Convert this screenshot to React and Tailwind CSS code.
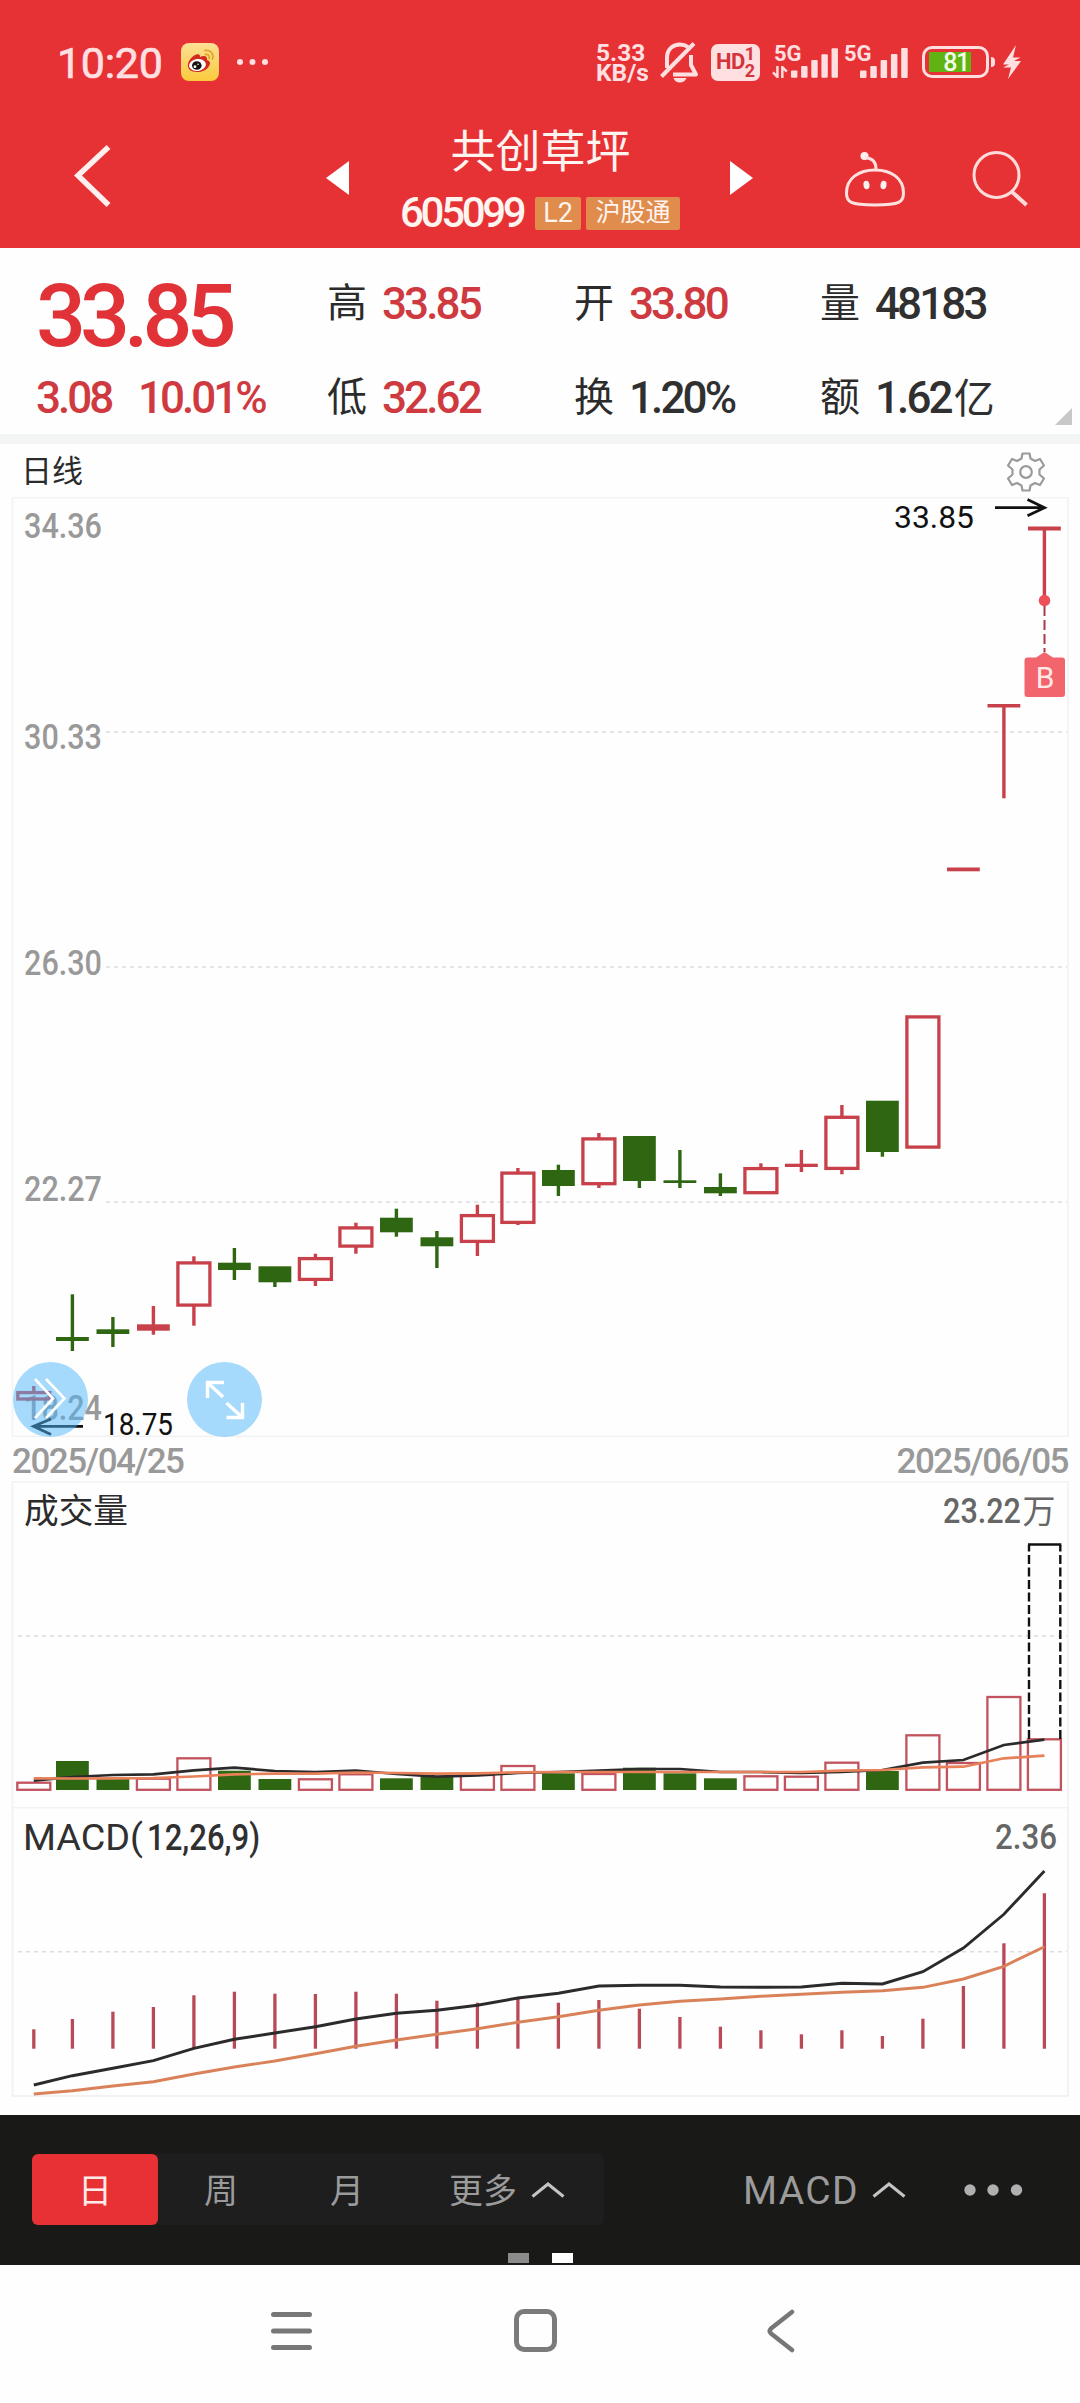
import React from 'react';

const LINE_RED = '#c8404a';
const GREEN = '#2f6612';
const ORANGE = '#d98259';
const FONT = 'Roboto, "Noto Sans CJK SC", sans-serif';

// x centre of the n-th trading day
const dayX = (i) => (i === 0 ? 33.8 : 72.4 + (i - 1) * 40.5);

// [type, high, bodyTop, bodyBottom, low]  r = hollow, s = solid red, g = green
const candles = [
  ['r', 1386, 1391, 1400.6, 1400],
  ['g', 1294.3, 1337, 1341, 1351],
  ['g', 1317, 1329.3, 1334, 1347],
  ['s', 1306, 1324.3, 1330.7, 1334.7],
  ['r', 1256.3, 1261.3, 1306.7, 1325.7],
  ['g', 1248, 1262.7, 1270, 1280],
  ['g', 1266.3, 1266.3, 1282.3, 1287],
  ['r', 1253.7, 1257, 1281, 1286],
  ['r', 1222.7, 1226.3, 1247.7, 1253.7],
  ['g', 1208.7, 1217.7, 1232.3, 1236.7],
  ['g', 1231, 1237.3, 1246.3, 1268],
  ['r', 1204.7, 1214, 1243, 1256],
  ['r', 1168, 1171.5, 1224, 1225],
  ['g', 1164.7, 1170, 1186, 1196],
  ['r', 1133, 1137.3, 1185.3, 1188],
  ['g', 1136, 1136, 1181, 1188],
  ['g', 1150, 1180.3, 1183, 1188],
  ['g', 1173.3, 1187, 1193.3, 1196],
  ['r', 1163.3, 1167, 1194.3, 1194],
  ['s', 1150, 1163.7, 1167, 1172],
  ['r', 1105, 1115.7, 1170, 1174.3],
  ['g', 1100.7, 1100.7, 1152, 1156.7],
  ['r', 1016, 1015.3, 1148.7, 1148],
  ['s', 867.5, 867.5, 871.3, 871],
  ['s', 704, 704, 707.5, 798.3],
  ['s', 526.5, 526.5, 530.5, 600],
];

const volumes = [
  ['r', 1781.7], ['g', 1761], ['g', 1779], ['r', 1777.7], ['r', 1757.3], ['g', 1770.7],
  ['g', 1779], ['r', 1778.3], ['r', 1773.3], ['g', 1778.3], ['g', 1776.7], ['r', 1774],
  ['r', 1765], ['g', 1773.3], ['r', 1773], ['g', 1767.7], ['g', 1773.3], ['g', 1778.3],
  ['r', 1775.3], ['r', 1775.7], ['r', 1761.7], ['g', 1771], ['r', 1734.3], ['r', 1762],
  ['r', 1696], ['r', 1738.3],
];

const volMa5 = [
  1780.7, 1777, 1775, 1774.3, 1770.3, 1767.7, 1771, 1772, 1770.5, 1774, 1776.7, 1775.5, 1773,
  1772, 1770.7, 1769, 1769, 1772, 1772, 1773, 1772, 1770, 1762.7, 1760, 1745, 1739.7,
];
const volMa10 = [
  1778.3, 1778.5, 1778.3, 1778, 1776.5, 1774.3, 1773.7, 1773.7, 1772.5, 1773, 1773.7, 1773.3, 1772.3,
  1772, 1772, 1772, 1772, 1772, 1772, 1772, 1770.7, 1770, 1767.3, 1766.7, 1758.3, 1755.7,
];

const macdBars = [
  2029.3, 2019, 2011.7, 2007, 1995.3, 1991.7, 1993.7, 1994, 1991.7, 1993.7, 2000.7, 2002.7, 1999,
  2002.7, 2000, 2008.7, 2017, 2026.7, 2030.3, 2034.3, 2030.3, 2036, 2018.7, 1986, 1943.3, 1893.3,
];
const dif = [
  2085, 2075.7, 2068.3, 2060.7, 2048.3, 2039.3, 2033, 2026.7, 2019, 2013.3, 2010.3, 2005.3, 1998,
  1993.3, 1986, 1985.3, 1985.3, 1987, 1987.3, 1987, 1983.3, 1984, 1971.7, 1948, 1914.3, 1871,
];
const dea = [
  2094, 2090.7, 2086, 2081.7, 2074, 2067, 2061, 2053.7, 2046.3, 2040, 2034.3, 2028.7, 2022.3,
  2016.7, 2010.3, 2005, 2001.3, 1999, 1996.3, 1994.3, 1992.3, 1990.7, 1987.3, 1979, 1966.3, 1946.7,
];

const toPoints = (values) => values.map((y, i) => `${dayX(i)},${y}`).join(' ');

const Grid = ({ y, from = 18 }) => (
  <line x1={from} x2="1067" y1={y} y2={y} stroke="#dddddf" strokeWidth="1.6" strokeDasharray="4 4" />
);

const Label = ({ x, y, w, size = 35, fill = '#999', weight = 500, children }) => (
  <text x={x} y={y} fontSize={size} fill={fill} fontWeight={weight} textLength={w} lengthAdjust="spacingAndGlyphs">
    {children}
  </text>
);

const Signal = () => (
  <svg width="48" height="30" viewBox="0 0 48 30" fill="#ffdfe0">
    <rect x="0" y="22.5" width="6.5" height="7.5" rx="1" />
    <rect x="10.3" y="18" width="6.5" height="12" rx="1" />
    <rect x="20.6" y="12" width="6.5" height="18" rx="1" />
    <rect x="30.9" y="6" width="6.5" height="24" rx="1" />
    <rect x="41.2" y="0" width="6.5" height="30" rx="1" />
  </svg>
);

const StatusBar = () => (
  <div className="flex h-[124px] items-center pl-[57px] text-[#ffdfe0]">
    <div className="w-[104px] pt-[2px] text-[43px] leading-[44px] font-normal tracking-[-0.3px] [-webkit-text-stroke:0.7px_#ffdfe0]">10:20</div>
    <svg className="ml-5" width="38" height="38" viewBox="0 0 38 38">
      <defs>
        <linearGradient id="weibo" x1="0" y1="0" x2="0" y2="1">
          <stop offset="0" stopColor="#fbdf94" />
          <stop offset="1" stopColor="#fbcb3c" />
        </linearGradient>
      </defs>
      <rect width="38" height="38" rx="8" fill="url(#weibo)" />
      <path d="M7 21C8 16 14 10 18 11.500C19 12 19 13.500 19 14C23 12 26.500 12.500 26 17C29 18 30 20 28 23C26 27 21 29 16 29C10 29 6 26 7 21Z" fill="#d22a22" />
      <ellipse cx="16.500" cy="22" rx="8.500" ry="6" fill="#fff" transform="rotate(-8 16.500 22)" />
      <ellipse cx="15.800" cy="22.500" rx="4.800" ry="4.300" fill="#16120f" />
      <circle cx="14" cy="23.700" r="1.400" fill="#fff" />
      <circle cx="17" cy="21.200" r="0.800" fill="#fff" />
      <path d="M24 7.500C29.500 6.500 33 11 31.500 16M24.500 11.500C27 11 29 13 28.200 15.500" fill="none" stroke="#dfa52c" strokeWidth="1.800" strokeLinecap="round" />
    </svg>
    <svg className="ml-[17px]" width="34" height="8" viewBox="0 0 34 8" fill="#ffdfe0">
      <circle cx="4" cy="4" r="3" />
      <circle cx="16.500" cy="4" r="3" />
      <circle cx="29" cy="4" r="3" />
    </svg>

    <div className="ml-[326px] w-[56px] pt-0.5 text-[24.500px] leading-[20.500px] font-bold">
      <div>5.33</div>
      <div>KB/s</div>
    </div>
    <svg className="ml-[8px]" width="40" height="42" viewBox="0 0 40 42" fill="none" stroke="#ffdfe0" strokeWidth="4" strokeLinejoin="round">
      <path d="M7 27V17C7 8 13 3.500 20 3.500C23 3.500 26 4.500 28 6" />
      <path d="M31 14V24L36 33.500H13" />
      <path d="M1.500 35.500L34 2.500" />
      <path d="M13.500 37H26.500C25 41 21 41.500 20 41.500C18 41.500 15 41 13.500 37Z" fill="#ffdfe0" stroke="none" />
    </svg>
    <div className="ml-[11px] flex h-[37px] w-[49px] items-center justify-center rounded-[7px] bg-[#ffdfe0] text-[#d5343c]">
      <span className="text-[22px] leading-none font-bold tracking-[-0.500px]">HD</span>
      <span className="flex flex-col text-[18px] leading-[17px] font-bold">
        <span>1</span>
        <span>2</span>
      </span>
    </div>
    <div className="relative ml-[12px] flex h-[36px] w-[66px] items-end justify-end pb-[2px]">
      <span className="absolute top-[-1px] left-[2px] text-[22px] leading-[22px] font-bold">5G</span>
      <svg className="mr-[3px]" width="16" height="12" viewBox="0 0 16 12" fill="none" stroke="#ffdfe0" strokeWidth="2.500">
        <path d="M5.500 0V11L1 6.500M10.500 12V1L15 5.500" />
      </svg>
      <Signal />
    </div>
    <div className="relative ml-[4px] flex h-[36px] w-[66px] items-end justify-end pb-[2px]">
      <span className="absolute top-[-1px] left-[2px] text-[22px] leading-[22px] font-bold">5G</span>
      <Signal />
    </div>
    <div className="ml-[14px] flex items-center">
      <div className="relative flex h-[32px] w-[67px] items-center justify-center rounded-[10px] border-[3.5px] border-[#ffdfe0]">
        <div className="absolute top-[2.500px] left-[4px] h-[20px] w-[42px] bg-[#5fb312]" />
        <span className="relative pl-px text-[25px] leading-[25px] font-medium tracking-[-1.500px] text-[#f4ffe8]">81</span>
      </div>
      <div className="ml-[2px] h-[10px] w-[4px] rounded-r bg-[#ffdfe0]" />
    </div>
    <svg className="ml-[7px]" width="20" height="34" viewBox="0 0 20 34" fill="#ffdfe0">
      <path d="M14 0L1 19.500H7L1 22.500H9L6 34L19 16H12L18.500 12.500H11Z" />
    </svg>
  </div>
);

const TitleBar = () => (
  <div className="flex h-[104px] items-center">
    <svg className="ml-[73px]" width="38" height="64" viewBox="0 0 38 64" fill="none" stroke="#ffefee" strokeWidth="5.500">
      <path d="M35.500 3L5 31.500L35.500 61" />
    </svg>
    <svg className="mt-[3px] ml-[215px]" width="23" height="34" viewBox="0 0 23 34" fill="#fff">
      <path d="M23 0V34L0 17Z" />
    </svg>
    <div className="ml-[51px] w-[281px] text-[#fff4ef]">
      <div className="text-center text-[45px] leading-[74px] font-normal">共创草坪</div>
      <div className="flex h-[46px] items-center">
        <span className="w-[135px] text-[42px] leading-[42px] font-medium tracking-[-3.300px]">605099</span>
        <span className="flex h-[33px] w-[46px] items-center justify-center rounded-[2px] bg-[#e08c4d] text-[27px]">L2</span>
        <span className="ml-[5px] flex h-[33px] w-[94px] items-center justify-center rounded-[2px] bg-[#e08c4d] text-[25px]">沪股通</span>
      </div>
    </div>
    <svg className="mt-[3px] ml-[49px]" width="23" height="34" viewBox="0 0 23 34" fill="#fff">
      <path d="M0 0V34L23 17Z" />
    </svg>
    <svg className="mt-[6px] ml-[90px]" width="64" height="56" viewBox="0 0 64 56" fill="none" stroke="#ffe2e0" strokeWidth="3">
      <circle cx="21.500" cy="5" r="4" fill="#ffefee" stroke="none" />
      <path d="M22 6.500C29 7 33 11 33 18" />
      <path d="M32 19C48 19 60.500 27 60.500 42C60.500 51 57 54 32 54C7 54 3.500 51 3.500 42C3.500 27 16 19 32 19Z" />
      <ellipse cx="23.500" cy="34" rx="3" ry="4.200" fill="#ffefee" stroke="none" transform="rotate(-8 23.500 34)" />
      <ellipse cx="40.500" cy="34" rx="3" ry="4.200" fill="#ffefee" stroke="none" transform="rotate(8 40.500 34)" />
    </svg>
    <svg className="mt-[3px] ml-[64px]" width="58" height="58" viewBox="0 0 58 58" fill="none" stroke="#ffdcda" strokeWidth="3">
      <circle cx="25.500" cy="26" r="22.500" />
      <path d="M40 42L55.500 56" strokeWidth="4" />
    </svg>
  </div>
);

const Stat = ({ label, value, red }) => (
  <div className="flex h-[70px] items-center">
    <span className="w-[55px] text-[40px] leading-[70px] text-[#2b2b2b]">{label}</span>
    <span className={`text-[44px] leading-[70px] font-medium tracking-[-2.900px] ${red ? 'text-[#cf3a40]' : 'text-[#303030]'}`}>
      {value}
    </span>
  </div>
);

const Quote = () => (
  <div className="relative flex h-[186px] pt-[21px]">
    <div className="w-[327px] pt-[12px] pl-[36px] font-medium">
      <div className="text-[88px] leading-[70px] tracking-[-6px] text-[#e03237]">33.85</div>
      <div className="mt-3 flex text-[44px] leading-[70px] tracking-[-3px] text-[#cf3a40]">
        <span className="w-[102px]">3.08</span>
        <span>10.01%</span>
      </div>
    </div>
    <div className="grid grid-cols-[247px_246px_auto] content-start gap-y-6">
      <Stat label="高" value="33.85" red />
      <Stat label="开" value="33.80" red />
      <Stat label="量" value="48183" />
      <Stat label="低" value="32.62" red />
      <Stat label="换" value="1.20%" />
      <Stat label="额" value={<>1.62<span className="pl-[3px] text-[41px] font-normal">亿</span></>} />
    </div>
    <svg className="absolute right-2 bottom-[9px]" width="17" height="17" viewBox="0 0 17 17">
      <path d="M17 0V17H0Z" fill="#c8c8c8" />
    </svg>
  </div>
);

const Candle = ({ i, type, high, top, bottom, low }) => {
  const x = dayX(i);
  const color = type === 'g' ? GREEN : LINE_RED;
  return (
    <g>
      {high < top && <line x1={x} x2={x} y1={high} y2={top + 1} stroke={color} strokeWidth="3.400" />}
      {low > bottom && <line x1={x} x2={x} y1={bottom - 1} y2={low} stroke={color} strokeWidth="3.400" />}
      {type === 'r' ? (
        <rect x={x - 16} y={top + 1.6} width="32" height={bottom - top - 3.2} fill="none" stroke={color} strokeWidth="3.300" />
      ) : (
        <rect x={x - 16.4} y={top} width="32.800" height={bottom - top} fill={color} />
      )}
    </g>
  );
};

const KLineChart = () => (
  <div className="relative h-[940px]">
    <svg className="block" width="1080" height="940" viewBox="0 497 1080 940" fontFamily={FONT}>
      <path d="M12.500 1437V497.500H1068V1437" fill="none" stroke="#f4f4f5" strokeWidth="2" />
      <Grid y={732} from={106} />
      <Grid y={967} from={106} />
      <Grid y={1202} from={106} />
      <Label x={24} y={538} w={78}>34.36</Label>
      <Label x={24} y={749} w={78}>30.33</Label>
      <Label x={24} y={975} w={78}>26.30</Label>
      <Label x={24} y={1201} w={78}>22.27</Label>
      <Label x={24} y={1420} w={78}>18.24</Label>

      {candles.map(([type, high, top, bottom, low], i) => (
        <Candle key={i} i={i} type={type} high={high} top={top} bottom={bottom} low={low} />
      ))}

      {/* buy marker */}
      <circle cx="1044.500" cy="600.500" r="5.800" fill="#ee5059" />
      <path d="M1044.500 606V652" stroke="#a63b46" strokeWidth="2" strokeDasharray="10 4" />
      <path d="M1027 657.500H1036L1044.500 652L1053 657.500H1062Q1065 657.500 1065 660.500V694Q1065 697 1062 697H1027.500Q1024.500 697 1024.500 694V660.500Q1024.500 657.500 1027.500 657.500Z" fill="#f2656c" />
      <text x="1045" y="688" fontSize="30" fill="#ffe9e8" textAnchor="middle">B</text>

      <path d="M995 507.700H1044M1027.500 499.500L1044.500 507.700L1027.500 515.800" fill="none" stroke="#111" strokeWidth="2.800" />
      <Label x={894} y={527.5} w={80} size={30.5} fill="#111" weight={400}>33.85</Label>
      <path d="M83 1426.300H34M51 1419L33.500 1426.300L51 1434.500" fill="none" stroke="#111" strokeWidth="2.800" />
      <Label x={103} y={1434.5} w={70} size={31} fill="#111" weight={400}>18.75</Label>
      <line x1="14" x2="1067" y1="1436.500" y2="1436.500" stroke="#f0f0f2" strokeWidth="1.500" />
    </svg>

    <button className="absolute top-[864.500px] left-[12.500px] h-[75px] w-[75px] rounded-full bg-[#4db5f9]/50">
      <svg width="75" height="75" viewBox="0 0 75 75" fill="none" stroke="#fff" strokeWidth="2.600">
        <path d="M22 17L40 36.500L22 56M33 17L51.500 36.500L33 56" />
      </svg>
    </button>
    <button className="absolute top-[864.500px] left-[186.500px] h-[75px] w-[75px] rounded-full bg-[#4db5f9]/50">
      <svg width="75" height="75" viewBox="0 0 75 75" fill="none" stroke="#fff" strokeWidth="3.400">
        <path d="M37 20.500H20.500V36M20.500 20.500L36 35M39.500 55.500H55.500V41M55.500 55.500L39.500 41" />
      </svg>
    </button>
  </div>
);

const VolumeChart = () => (
  <svg className="block" width="1080" height="326" viewBox="0 1481 1080 326" fontFamily={FONT}>
    <path d="M12.500 1807V1481.700H1068V1807" fill="none" stroke="#f3f3f4" strokeWidth="2" />
    <Grid y={1636} />
    <Label x={24} y={1523} w={104} size={34} fill="#2b2b2b" weight={400}>成交量</Label>
    <Label x={943} y={1526 - 3} w={78} size={35} fill="#666">23.22</Label>
    <text x="1022.500" y="1523" fontSize="33" fill="#666">万</text>

    {volumes.map(([type, top], i) =>
      type === 'r' ? (
        <rect key={i} x={dayX(i) - 16.5} y={top + 1} width="33" height={1788.8 - top} fill="none" stroke="#c2525d" strokeWidth="2.300" />
      ) : (
        <rect key={i} x={dayX(i) - 16.4} y={top} width="32.800" height={1790 - top} fill={GREEN} />
      )
    )}
    <path d="M1029 1739V1545M1060.300 1739V1545" stroke="#111" strokeWidth="2.400" strokeDasharray="9 3.500" />
    <path d="M1028 1544.500H1061.300" stroke="#111" strokeWidth="2.400" />
    <polyline points={toPoints(volMa5)} fill="none" stroke="#2b2b2b" strokeWidth="2.700" />
    <polyline points={toPoints(volMa10)} fill="none" stroke="#e8805a" strokeWidth="2.700" />
  </svg>
);

const MacdChart = () => (
  <svg className="block" width="1080" height="308" viewBox="0 1807 1080 308" fontFamily={FONT}>
    <rect x="12.500" y="1807.500" width="1055.500" height="288.500" fill="none" stroke="#f2f2f3" strokeWidth="2" />
    <Grid y={1951.7} />
    <Label x={23} y={1850} w={120} size={37} fill="#303030" weight={400}>MACD(</Label>
    <Label x={147} y={1850} w={113} size={36} fill="#303030">12,26,9)</Label>
    <Label x={995} y={1849} w={62} size={35} fill="#666">2.36</Label>
    {macdBars.map((y, i) => (
      <line key={i} x1={dayX(i)} x2={dayX(i)} y1={y} y2="2048.700" stroke="#b84a58" strokeWidth="3.300" />
    ))}
    <polyline points={toPoints(dif)} fill="none" stroke="#2b2b2b" strokeWidth="2.900" />
    <polyline points={toPoints(dea)} fill="none" stroke={ORANGE} strokeWidth="2.900" />
  </svg>
);

const Gear = () => (
  <svg width="40" height="40" viewBox="0 0 40 40" fill="none" stroke="#9a9a9a" strokeWidth="2.200" strokeLinejoin="round">
    <path d="M16.500 1.500H23.500L24.500 6.500L29 9L34 7L38 13.500L33.500 17.500V22.500L38 26.500L34 33L29 31L24.500 33.500L23.500 38.500H16.500L15.500 33.500L11 31L6 33L2 26.500L6.500 22.500V17.500L2 13.500L6 7L11 9L15.500 6.500Z" />
    <circle cx="20" cy="20" r="5.800" />
  </svg>
);

const Caret = () => (
  <svg width="34" height="16" viewBox="0 0 34 16" fill="none" stroke="#c4c4c4" strokeWidth="3">
    <path d="M1.500 14.500L17 2L32.500 14.500" />
  </svg>
);

const Toolbar = () => (
  <div className="flex h-[150px] flex-col bg-[#191918] text-[34px] text-[#9b9b9b]">
    <div className="flex h-[110px] items-end pl-8">
      <div className="flex h-[71px] w-[572px] items-center rounded-[6px] bg-[#1e1e1e]">
        <div className="flex h-full w-[126px] items-center justify-center rounded-[6px] bg-[#e73135] pt-[3px] text-[#ffecea]">日</div>
        <div className="w-[126px] pt-[3px] text-center">周</div>
        <div className="w-[126px] pt-[3px] text-center">月</div>
        <div className="flex items-center gap-[14px] pl-[39px]">
          <span className="pt-[3px]">更多</span>
          <Caret />
        </div>
      </div>
      <div className="ml-[139px] flex h-[71px] items-center">
        <span className="w-[129px] pt-[3px] text-[39px] tracking-[1.300px]">MACD</span>
        <Caret />
        <svg className="ml-[58px]" width="60" height="12" viewBox="0 0 60 12" fill="#b0b0b0">
          <circle cx="6" cy="6" r="5.700" />
          <circle cx="29" cy="6" r="5.700" />
          <circle cx="52.500" cy="6" r="5.700" />
        </svg>
      </div>
    </div>
    <div className="mt-auto flex justify-center gap-[23px] pb-[2px]">
      <div className="h-[10px] w-[21px] bg-[#8b8b8b]" />
      <div className="h-[10px] w-[21px] bg-white" />
    </div>
  </div>
);

const NavBar = () => (
  <div className="flex h-[138px] items-center pb-[7px] pl-[271px]">
    <svg width="41" height="40" viewBox="0 0 41 40" stroke="#777" strokeWidth="5" strokeLinecap="round">
      <path d="M2.500 3.500H38.500M2.500 20H38.500M2.500 36.500H38.500" />
    </svg>
    <div className="ml-[202px] h-[43px] w-[43px] rounded-[10px] border-[5px] border-[#7b7b7b]" />
    <svg className="ml-[209px]" width="30" height="44" viewBox="0 0 30 44" fill="none" stroke="#777" strokeWidth="4.500" strokeLinecap="round" strokeLinejoin="round">
      <path d="M26 3L5 19.500Q2.500 22 5 24.500L26 41" />
    </svg>
  </div>
);

const App = () => {
  return (
    <div className="h-[2403px] w-[1080px] overflow-hidden bg-[#fefefe] font-[Roboto,'Noto_Sans_CJK_SC',sans-serif]">
      <div className="h-[248px] bg-[#e73235]">
        <StatusBar />
        <TitleBar />
      </div>
      <Quote />
      <div className="h-[10px] bg-[#f2f5f3]" />
      <div className="flex h-[53px] items-center justify-between pt-[3px] pr-[34px] pl-[21px]">
        <span className="text-[31px] leading-[50px] text-[#2b2b2b]">日线</span>
        <Gear />
      </div>
      <KLineChart />
      <div className="flex h-[44px] items-center justify-between px-[12px] pt-[5px] text-[35px] leading-[39px] font-medium tracking-[-1.500px] text-[#999]">
        <span>2025/04/25</span>
        <span>2025/06/05</span>
      </div>
      <VolumeChart />
      <MacdChart />
      <Toolbar />
      <NavBar />
    </div>
  );
};

export default App;
